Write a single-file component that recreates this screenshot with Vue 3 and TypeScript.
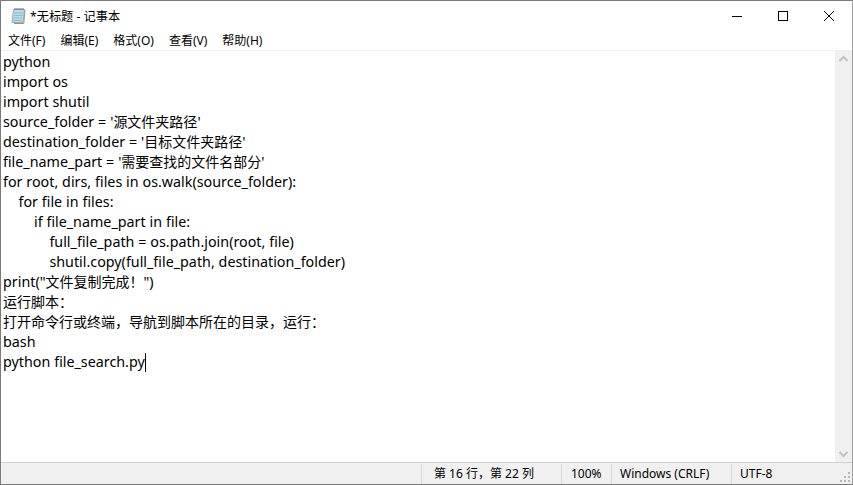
<script setup lang="ts">
const menus = ['文件(F)', '编辑(E)', '格式(O)', '查看(V)', '帮助(H)']
const source = [
  'python',
  'import os',
  'import shutil',
  "source_folder = '源文件夹路径'",
  "destination_folder = '目标文件夹路径'",
  "file_name_part = '需要查找的文件名部分'",
  'for root, dirs, files in os.walk(source_folder):',
  '    for file in files:',
  '        if file_name_part in file:',
  '            full_file_path = os.path.join(root, file)',
  '            shutil.copy(full_file_path, destination_folder)',
  'print("文件复制完成！")',
  '运行脚本：',
  '打开命令行或终端，导航到脚本所在的目录，运行：',
  'bash',
  'python file_search.py',
]
interface Seg { text: string; cjk: boolean }
const lines: Seg[][] = source.map((l) =>
  (l.match(/[\u3000-\u9fff\uff00-\uffef]+|[^\u3000-\u9fff\uff00-\uffef]+/g) ?? []).map((text) => ({
    text,
    cjk: /[\u3000-\u9fff\uff00-\uffef]/.test(text),
  })),
)
</script>

<template>
  <div class="window">
    <header class="titlebar">
      <svg class="app-icon" width="17" height="17" viewBox="0 0 17 17">
        <path d="M2 15.500L3.500 2.500h11L13 15.500z" fill="#b9dcec" stroke="#8db4c6" />
        <path d="M15 3l-1.200 13.500H4" fill="none" stroke="#a89468" />
        <path d="M4 6h9M3.800 8.500h9M3.500 11h9M3.300 13.500h9" stroke="#8fbcd2" />
        <path d="M5 1v2M7 1v2M9 1v2M11 1v2M13 1v2" stroke="#667" />
      </svg>
      <span class="title">*无标题 - 记事本</span>
      <div class="controls">
        <button class="ctrl">
          <svg width="12" height="12" viewBox="0 0 12 12"><path d="M1 6.500h10" stroke="#000" /></svg>
        </button>
        <button class="ctrl">
          <svg width="12" height="12" viewBox="0 0 12 12"><rect x="1.500" y="1.500" width="9" height="9" fill="none" stroke="#000" /></svg>
        </button>
        <button class="ctrl">
          <svg width="12" height="12" viewBox="0 0 12 12"><path d="M1 1l10 10M11 1L1 11" stroke="#000" /></svg>
        </button>
      </div>
    </header>
    <nav class="menubar">
      <span v-for="m in menus" :key="m" class="menu">{{ m }}</span>
    </nav>
    <main class="body">
      <div class="editor">
        <div v-for="(l, i) in lines" :key="i" class="line">
          <span v-for="(s, j) in l" :key="j" :class="{ cjk: s.cjk }">{{ s.text }}</span><span v-if="i === lines.length - 1" class="caret"></span>
        </div>
      </div>
      <aside class="scrollbar">
        <svg width="17" height="17" viewBox="0 0 17 17"><path d="M4.500 10l4-4 4 4" fill="none" stroke="#c2c2c2" stroke-width="2" /></svg>
        <svg width="17" height="17" viewBox="0 0 17 17"><path d="M4.500 7l4 4 4-4" fill="none" stroke="#c2c2c2" stroke-width="2" /></svg>
      </aside>
    </main>
    <footer class="statusbar">
      <span class="cell pos">第 16 行，第 22 列</span>
      <span class="cell zoom">100%</span>
      <span class="cell eol">Windows (CRLF)</span>
      <span class="cell enc">UTF-8</span>
      <svg class="grip" width="12" height="12" viewBox="0 0 12 12" fill="#b5b5b5">
        <rect x="9" y="9" width="2" height="2" /><rect x="5" y="9" width="2" height="2" /><rect x="1" y="9" width="2" height="2" />
        <rect x="9" y="5" width="2" height="2" /><rect x="5" y="5" width="2" height="2" /><rect x="9" y="1" width="2" height="2" />
      </svg>
    </footer>
  </div>
</template>

<style>
html, body { margin: 0; background: #fff; overflow: hidden; }
</style>

<style scoped>
.window {
  width: 853px;
  height: 485px;
  box-sizing: border-box;
  border: 1px solid #7a7a7a;
  border-right-color: #a0a0a0;
  display: flex;
  flex-direction: column;
  background: #fff;
  font-family: "Noto Sans", "Noto Sans CJK SC", sans-serif;
  color: #000;
}
.titlebar {
  height: 29px;
  display: flex;
  align-items: center;
  padding-left: 9px;
  flex: none;
}
.app-icon { margin-right: 3px; }
.title { font-size: 12.200px; }
.controls { margin-left: auto; display: flex; }
.ctrl {
  width: 46px;
  height: 29px;
  padding: 0;
  border: 0;
  background: none;
  display: flex;
  align-items: center;
  justify-content: center;
}
.menubar {
  height: 20px;
  box-sizing: content-box;
  display: flex;
  align-items: center;
  padding-left: 7px;
  gap: 15px;
  font-size: 12px;
  line-height: 22px;
  flex: none;
  border-bottom: 1px solid #f0f0f0;
}
.menu { position: relative; top: 1px; }
.body { flex: 1; display: flex; min-height: 0; }
.editor {
  flex: 1;
  padding: 1px 0 0 2px;
  font-size: 14.300px;
  word-spacing: 0.150px;
  line-height: 20px;
  white-space: pre;
}
.line { height: 20px; }
.cjk { font-size: 14px; }
.caret {
  display: inline-block;
  width: 1px;
  height: 19px;
  background: #000;
  vertical-align: -5px;
}
.scrollbar {
  width: 17px;
  flex: none;
  background: #f0f0f0;
  display: flex;
  flex-direction: column;
  justify-content: space-between;
}
.statusbar {
  height: 22px;
  box-sizing: border-box;
  flex: none;
  display: flex;
  align-items: center;
  background: #f0f0f0;
  border-top: 1px solid #d0d0d0;
  padding-left: 420px;
  font-size: 12px;
  position: relative;
}
.cell {
  height: 20px;
  line-height: 20px;
  box-sizing: border-box;
  border-left: 1px solid #d7d7d7;
  padding-left: 12px;
}
.pos { width: 140px; }
.zoom { width: 50px; padding-left: 9px; }
.eol { width: 120px; padding-left: 8px; }
.enc { padding-left: 8px; }
.grip { position: absolute; right: 1px; bottom: 1px; }
</style>
